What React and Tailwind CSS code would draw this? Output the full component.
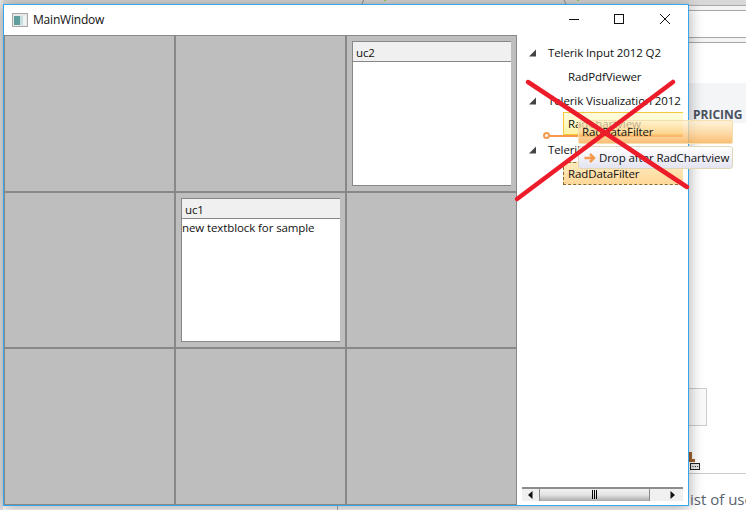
import React from "react";

const font = { fontFamily: '"Open Sans", "Noto Sans", sans-serif' };

const Card = ({ title, children }) => (
  <div className="m-[5px] flex flex-1 flex-col border-y border-l border-[#888888] bg-white">
    <div className="h-[20px] border-b border-[#888888] bg-[#f0f0f0] pl-[3px] text-[11.5px] leading-[21px] tracking-[-0.1px]">
      {title}
    </div>
    <div className="text-[11.5px] leading-[18px] tracking-[-0.1px]">{children}</div>
  </div>
);

const Cell = ({ children }) => (
  <div className="flex bg-[#bebebe]">{children}</div>
);

const Arrow = () => (
  <svg width="8" height="8" viewBox="0 0 8 8" className="shrink-0">
    <path d="M7 0.5V7.5H0Z" fill="#444444" />
  </svg>
);

const TreeHeader = ({ children }) => (
  <div className="flex h-[24px] items-center gap-[11px] pl-[12px] whitespace-nowrap">
    <Arrow />
    <span>{children}</span>
  </div>
);

const Scrollbar = () => (
  <div className="mx-[5px] mb-[4px] mt-auto flex h-[14px] border-t-2 border-[#8c8c8c] bg-[#f0f0f0]">
    <div className="flex w-[17px] items-center justify-center">
      <svg width="5" height="8" viewBox="0 0 5 8">
        <path d="M4.5 0V8L0 4Z" fill="#111111" />
      </svg>
    </div>
    <div className="flex w-[111px] items-center justify-center gap-[1px] border-x border-[#8c8c8c] bg-gradient-to-b from-[#f2f2f2] via-[#e2e2e2] to-[#a9a9a9] pb-[1px]">
      <div className="h-[9px] w-[1px] bg-black" />
      <div className="h-[9px] w-[1px] bg-black" />
      <div className="h-[9px] w-[1px] bg-black" />
    </div>
    <div className="flex flex-1 items-center justify-end pr-[8px]">
      <svg width="5" height="8" viewBox="0 0 5 8">
        <path d="M0.5 0V8L5 4Z" fill="#111111" />
      </svg>
    </div>
  </div>
);

export default function App() {
  return (
    <div
      className="relative h-[510px] w-[746px] overflow-hidden bg-white text-[#111111]"
      style={font}
    >
      {/* page behind the window */}
      <div className="flex h-full flex-col pl-[689px]">
        <div className="h-[6px] border-b border-[#a8a8a8] bg-[#d8d8d8]" />
        <div className="h-[5px] border-b border-[#a8a8a8] bg-[#f4f4f4]" />
        <div className="h-[28px] border-b border-[#a8a8a8]" />
        <div className="h-[5px] border-b border-[#a8a8a8] bg-[#f4f4f4]" />
        <div className="flex h-[40px]" />
        <div className="h-[40px] bg-[#f4f5f7] pl-[4px] pt-[23px] text-[12px] font-bold leading-[18px] whitespace-nowrap text-[#4a5160]">
          PRICING
        </div>
        <div className="mt-[265px] h-[39px] w-[18px] border-y border-r border-[#cccccc] bg-[#fafafa]" />
        <div className="mt-[47px] border-t border-[#cccccc] pl-[1px] pt-[14px] text-[15px] leading-[22px] whitespace-nowrap text-[#59636e]">
          ist of use
        </div>
      </div>

      <div className="absolute left-[0px] top-0 h-[4px] w-[689px] bg-[#d4d4d4]" />
      <div className="absolute left-0 top-0 h-full w-[3px] bg-[#e4e4e4]" />
      <div className="absolute left-[337px] top-[506px] h-[4px] w-[1px] bg-[#b0b0b0]" />

      {/* browser tab corners showing above the window */}
      <svg className="absolute left-[360px] top-0" width="230" height="4" viewBox="0 0 230 4">
        <path d="M3.5 0L2 4M204 0L206 4" stroke="#8c8c8c" fill="none" />
        <rect x="24" y="0" width="2" height="1" fill="#8fd14f" />
        <rect x="217" y="0" width="2" height="1" fill="#8fd14f" />
      </svg>

      {/* cursor next to the window */}
      <svg className="absolute left-[689px] top-[451px]" width="12" height="20" viewBox="0 0 12 20">
        <path d="M0 1H3V8H6V11H0Z" fill="#a0622d" />
        <rect x="1.5" y="12.5" width="9" height="6" fill="#e8e8e8" stroke="#222222" />
        <path d="M3.5 15.5H4.5M6 15.5H7M8.2 15.5H9" stroke="#222222" />
      </svg>

      {/* window */}
      <div className="absolute left-[3px] top-[4px] flex h-[502px] w-[686px] flex-col border border-[#38a6ee] bg-white shadow-[0_2px_14px_rgba(0,0,0,0.35)]">
        <div className="flex h-[30px] shrink-0 items-center">
          <svg className="ml-[8px]" width="16" height="14" viewBox="0 0 16 14">
            <rect x="0.5" y="0.5" width="15" height="13" fill="#e8e8e8" stroke="#a8a8a8" />
            <rect x="2" y="3" width="6" height="9" fill="#5f9e9c" />
            <rect x="8" y="3" width="3" height="9" fill="#c8dedd" />
            <rect x="11" y="3" width="3" height="9" fill="#f0f4f4" />
          </svg>
          <span className="ml-[5px] text-[12px] tracking-[-0.2px]">MainWindow</span>
          <div className="ml-auto flex items-center">
            <svg width="46" height="30" viewBox="0 0 46 30">
              <path d="M19 14.5H29" stroke="#111111" />
            </svg>
            <svg width="46" height="30" viewBox="0 0 46 30">
              <rect x="18.5" y="9.5" width="9" height="9" fill="none" stroke="#111111" />
            </svg>
            <svg width="46" height="30" viewBox="0 0 46 30">
              <path d="M18 9L28 19M28 9L18 19" stroke="#111111" />
            </svg>
          </div>
        </div>

        <div className="flex min-h-0 flex-1">
          <div className="grid h-full w-[513px] shrink-0 grid-cols-[169px_169px_169px] grid-rows-[155px_154px_155px] gap-[2px] bg-[#888888] pb-[1px] pl-[1px] pr-[2px] pt-[1px]">
            <Cell />
            <Cell />
            <Cell>
              <Card title="uc2" />
            </Cell>
            <Cell />
            <Cell>
              <Card title="uc1">new textblock for sample</Card>
            </Cell>
            <Cell />
            <Cell />
            <Cell />
            <Cell />
          </div>

          <div className="flex min-w-0 flex-1 flex-col pt-[6px] text-[11.5px] tracking-[-0.1px]">
            <TreeHeader>Telerik Input 2012 Q2</TreeHeader>
            <div className="h-[24px] pl-[51px] leading-[24px]">RadPdfViewer</div>
            <div className="h-[23px]">
              <TreeHeader>Telerik Visualization 2012</TreeHeader>
            </div>
            <div className="ml-[46px] mr-[5px] h-[23px] border-y border-l border-[#f5c93c] bg-gradient-to-b from-[#fffde0] to-[#fff3a8] pl-[4px] leading-[21px]">
              RadChartview
            </div>
            <div className="h-[25px] pt-[3px]">
              <TreeHeader>Telerik Data 2012 Q2</TreeHeader>
            </div>
            <div className="ml-[46px] mr-[5px] mt-[2px] h-[23px] border-y border-l border-dashed border-[#8a6a30] bg-gradient-to-b from-[#ffe9bd] to-[#ffd898] pl-[4px] leading-[21px]">
              RadDataFilter
            </div>
            <Scrollbar />
          </div>
        </div>
      </div>

      {/* drop line */}
      <div className="absolute left-[543px] top-[132px] h-[7px] w-[7px] rounded-full border-2 border-[#f59a4c] bg-white" />
      <div className="absolute left-[550px] top-[135px] h-[2px] w-[133px] bg-[#f59a4c]" />

      {/* drag ghost */}
      <div className="absolute left-[578px] top-[120px] h-[24px] w-[155px] rounded-[2px] border border-[#f4dfae] bg-gradient-to-b from-[#fff0cc]/70 via-[#fdd190]/75 to-[#f9ae52]/80 pl-[3px] text-[11.5px] leading-[22px] tracking-[-0.1px]">
        RadDataFilter
      </div>

      {/* drop tooltip */}
      <div className="absolute left-[578px] top-[146px] flex h-[23px] w-[155px] items-center rounded-[3px] border border-[#e0d6b8] bg-gradient-to-b from-[#ffffff] to-[#e4e4f2] pl-[5px] text-[11.5px] tracking-[-0.1px]">
        <svg width="12" height="10" viewBox="0 0 12 10" className="shrink-0">
          <path d="M0.5 5H10M6 1L10 5L6 9" fill="none" stroke="#f59a4c" strokeWidth="2.5" />
        </svg>
        <span className="ml-[3px] whitespace-nowrap">Drop after RadChartview</span>
      </div>

      {/* red cross drawn over the screenshot */}
      <svg className="absolute left-0 top-0" width="746" height="510" viewBox="0 0 746 510">
        <path
          d="M528 82L687 187M673 82L517 199"
          stroke="#ec1c2a"
          strokeWidth="4.5"
          strokeLinecap="round"
          fill="none"
        />
      </svg>
    </div>
  );
}
